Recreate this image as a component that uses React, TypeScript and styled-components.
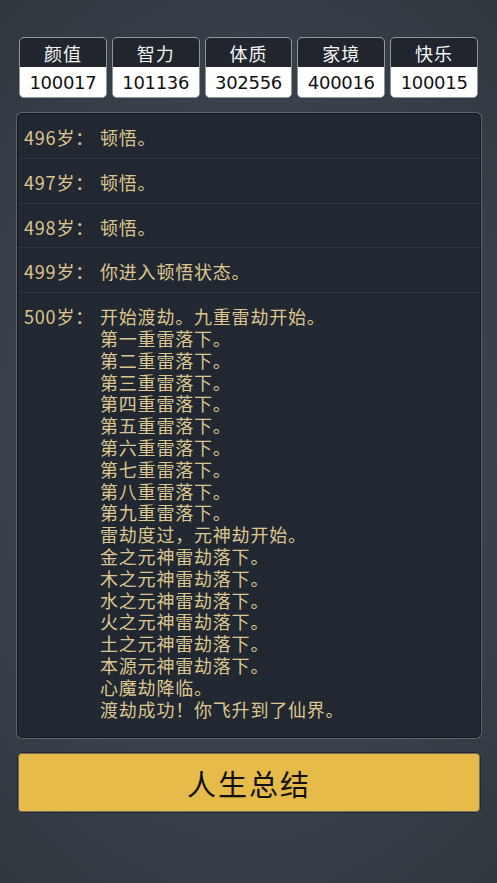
import styled, { createGlobalStyle } from "styled-components";

const GlobalStyle = createGlobalStyle`
  html, body {
    margin: 0;
    padding: 0;
    background: #353c45;
  }
  * {
    box-sizing: border-box;
  }
`;

const stats = [
  { name: "颜值", value: "100017" },
  { name: "智力", value: "101136" },
  { name: "体质", value: "302556" },
  { name: "家境", value: "400016" },
  { name: "快乐", value: "100015" },
];

const events: { age: number; lines: string[] }[] = [
  { age: 496, lines: ["顿悟。"] },
  { age: 497, lines: ["顿悟。"] },
  { age: 498, lines: ["顿悟。"] },
  { age: 499, lines: ["你进入顿悟状态。"] },
  {
    age: 500,
    lines: [
      "开始渡劫。九重雷劫开始。",
      "第一重雷落下。",
      "第二重雷落下。",
      "第三重雷落下。",
      "第四重雷落下。",
      "第五重雷落下。",
      "第六重雷落下。",
      "第七重雷落下。",
      "第八重雷落下。",
      "第九重雷落下。",
      "雷劫度过，元神劫开始。",
      "金之元神雷劫落下。",
      "木之元神雷劫落下。",
      "水之元神雷劫落下。",
      "火之元神雷劫落下。",
      "土之元神雷劫落下。",
      "本源元神雷劫落下。",
      "心魔劫降临。",
      "渡劫成功！你飞升到了仙界。",
    ],
  },
];

const App = () => {
  return (
    <Page>
      <GlobalStyle />
      <StatsRow>
        {stats.map((s) => (
          <StatCard key={s.name}>
            <StatName>{s.name}</StatName>
            <StatValue>{s.value}</StatValue>
          </StatCard>
        ))}
      </StatsRow>

      <LogPanel>
        {events.map((e) => (
          <LogRow key={e.age}>
            <Age>{e.age}岁：</Age>
            <Lines>
              {e.lines.map((l, i) => (
                <Line key={i}>{l}</Line>
              ))}
            </Lines>
          </LogRow>
        ))}
      </LogPanel>

      <SummaryButton>人生总结</SummaryButton>
    </Page>
  );
};

export default App;

const Page = styled.div`
  min-height: 100vh;
  padding: 37px 16px 0 17px;
  background: radial-gradient(
    ellipse 90% 70% at 50% 50%,
    #404852 0%,
    #39414a 55%,
    #2d333b 100%
  );
  font-family: "Noto Sans CJK SC", "Noto Sans", sans-serif;
`;

const StatsRow = styled.div`
  display: grid;
  grid-template-columns: repeat(5, 1fr);
  gap: 5px;
  margin: 0 3px 0 2px;
`;

const StatCard = styled.div`
  border: 1px solid #8e959d;
  border-radius: 5px;
  overflow: hidden;
  background: #fff;
`;

const StatName = styled.div`
  height: 29px;
  display: flex;
  align-items: center;
  justify-content: center;
  background: #20252e;
  color: #f4f4f4;
  font-size: 18px;
  letter-spacing: 1px;
`;

const StatValue = styled.div`
  height: 30px;
  display: flex;
  align-items: center;
  justify-content: center;
  background: #fff;
  color: #111;
  font-family: "DejaVu Sans", "Noto Sans", sans-serif;
  font-size: 18px;
  font-weight: 400;
  letter-spacing: -0.3px;
`;

const LogPanel = styled.div`
  margin-top: 15px;
  height: 625px;
  overflow: hidden;
  background: #222832;
  border: 1px solid #15191e;
  border-radius: 5px;
  box-shadow: 0 0 0 1px #5d666f;
`;

const LogRow = styled.div`
  display: flex;
  padding: 13px 6px 9px 6px;
  border-bottom: 1px solid #303741;
  color: #dcc68f;
  font-size: 18px;
  line-height: 21.8px;
  letter-spacing: 0.8px;

  &:last-child {
    border-bottom: none;
  }
`;

const Age = styled.div`
  width: 76px;
  flex-shrink: 0;
  white-space: nowrap;
`;

const Lines = styled.div`
  display: flex;
  flex-direction: column;
  white-space: nowrap;
`;

const Line = styled.div`
  height: 21.8px;
`;

const SummaryButton = styled.button`
  display: flex;
  align-items: center;
  justify-content: center;
  width: 100%;
  height: 61px;
  margin-top: 14px;
  background: #e7bb49;
  border: 1px solid #23272c;
  border-radius: 5px;
  box-shadow: inset 0 0 0 1px #77705c;
  color: #111;
  font-family: "Noto Sans CJK SC", sans-serif;
  font-size: 29px;
  letter-spacing: 2px;
  cursor: pointer;
`;
